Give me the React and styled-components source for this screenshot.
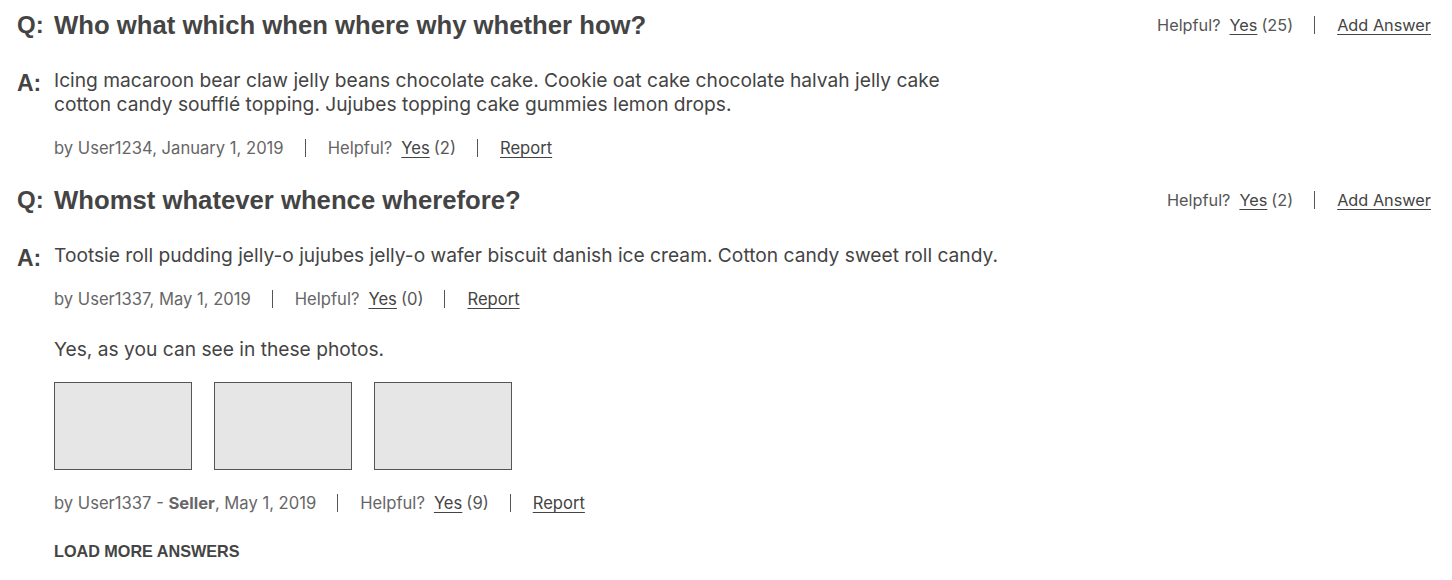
import React from 'react'
import styled, { createGlobalStyle } from 'styled-components'

const GlobalStyle = createGlobalStyle`
  body {
    margin: 0;
    background: #fff;
    font-family: Inter, "Liberation Sans", sans-serif;
    color: #444;
  }
`

const questions = [
  {
    id: 1,
    body: 'Who what which when where why whether how?',
    helpful: 25,
    answers: [
      {
        id: 1,
        body: 'Icing macaroon bear claw jelly beans chocolate cake. Cookie oat cake chocolate halvah jelly cake cotton candy soufflé topping. Jujubes topping cake gummies lemon drops.',
        user: 'User1234',
        date: 'January 1, 2019',
        helpful: 2,
        width: 900,
      },
    ],
  },
  {
    id: 2,
    body: 'Whomst whatever whence wherefore?',
    helpful: 2,
    loadMore: true,
    answers: [
      {
        id: 2,
        body: 'Tootsie roll pudding jelly-o jujubes jelly-o wafer biscuit danish ice cream. Cotton candy sweet roll candy.',
        user: 'User1337',
        date: 'May 1, 2019',
        helpful: 0,
      },
      {
        id: 3,
        body: 'Yes, as you can see in these photos.',
        user: 'User1337',
        seller: true,
        date: 'May 1, 2019',
        helpful: 9,
        photos: 3,
      },
    ],
  },
]

const App = () => {
  return (
    <>
      <GlobalStyle />
      <List>
        {questions.map((q) => (
          <Question key={q.id}>
            <QRow>
              <Label>Q:</Label>
              <QText>{q.body}</QText>
              <QActions>
                <span>Helpful?</span>
                <LinkText>Yes</LinkText>
                <Count>({q.helpful})</Count>
                <Divider />
                <LinkText $plain>Add Answer</LinkText>
              </QActions>
            </QRow>
            <ARow>
              <ALabel>A:</ALabel>
              <Answers>
                {q.answers.map((a) => (
                  <Answer key={a.id}>
                    <AText $width={a.width}>{a.body}</AText>
                    {a.photos && (
                      <Photos>
                        {Array.from({ length: a.photos }).map((_, i) => (
                          <Photo key={i} />
                        ))}
                      </Photos>
                    )}
                    <Meta>
                      <span>
                        by {a.user}
                        {a.seller && (
                          <>
                            {' - '}
                            <Seller>Seller</Seller>
                          </>
                        )}
                        , {a.date}
                      </span>
                      <Divider />
                      <span>Helpful?</span>
                      <LinkText>Yes</LinkText>
                      <Count>({a.helpful})</Count>
                      <Divider />
                      <LinkText $plain>Report</LinkText>
                    </Meta>
                  </Answer>
                ))}
                {q.loadMore && <LoadMore>LOAD MORE ANSWERS</LoadMore>}
              </Answers>
            </ARow>
          </Question>
        ))}
      </List>
    </>
  )
}

export default App

const List = styled.div`
  display: flex;
  flex-direction: column;
  gap: 27px;
  padding: 10px 21px 0 17px;
`

const Question = styled.div`
  display: flex;
  flex-direction: column;
`

const QRow = styled.div`
  display: flex;
  align-items: center;
  height: 30px;
`

const Label = styled.div`
  width: 37px;
  flex-shrink: 0;
  font-family: "Liberation Sans", Arial, sans-serif;
  font-weight: 700;
  font-size: 24px;
  color: #444;
`

const QText = styled.div`
  flex: 1;
  font-family: "Liberation Sans", Arial, sans-serif;
  font-weight: 700;
  font-size: 25.7px;
  color: #444;
`

const QActions = styled.div`
  display: flex;
  align-items: center;
  font-size: 16.3px;
  color: #555;
`

const LinkText = styled.span`
  text-decoration: underline;
  text-underline-offset: 3px;
  margin-left: ${(p) => (p.$plain ? '0' : '9px')};
  color: #444;
`

const Count = styled.span`
  margin-left: 4px;
  color: #555;
`

const Divider = styled.span`
  display: inline-block;
  width: 1px;
  height: 18px;
  background: #555;
  margin: 0 22px 0 21px;
`

const ARow = styled.div`
  display: flex;
  margin-top: 28px;
`

const ALabel = styled(Label)`
  font-size: 23px;
  line-height: 24px;
  padding-top: 3px;
`

const Answers = styled.div`
  display: flex;
  flex-direction: column;
  gap: 28px;
`

const Answer = styled.div`
  display: flex;
  flex-direction: column;
`

const AText = styled.div`
  font-size: 19.2px;
  line-height: 24px;
  color: #444;
  max-width: ${(p) => (p.$width ? `${p.$width}px` : 'none')};
`

const Photos = styled.div`
  display: flex;
  gap: 22px;
  margin-top: 21px;
  margin-bottom: 1px;
`

const Photo = styled.div`
  width: 136px;
  height: 86px;
  background: #e6e6e6;
  border: 1px solid #555;
`

const Meta = styled.div`
  display: flex;
  align-items: center;
  margin-top: 22px;
  font-size: 16.6px;
  color: #666;
`

const Seller = styled.b`
  font-weight: 700;
`

const LoadMore = styled.div`
  font-family: "Liberation Sans", Arial, sans-serif;
  font-weight: 700;
  font-size: 16.2px;
  color: #444;
  margin-top: 1px;
`
